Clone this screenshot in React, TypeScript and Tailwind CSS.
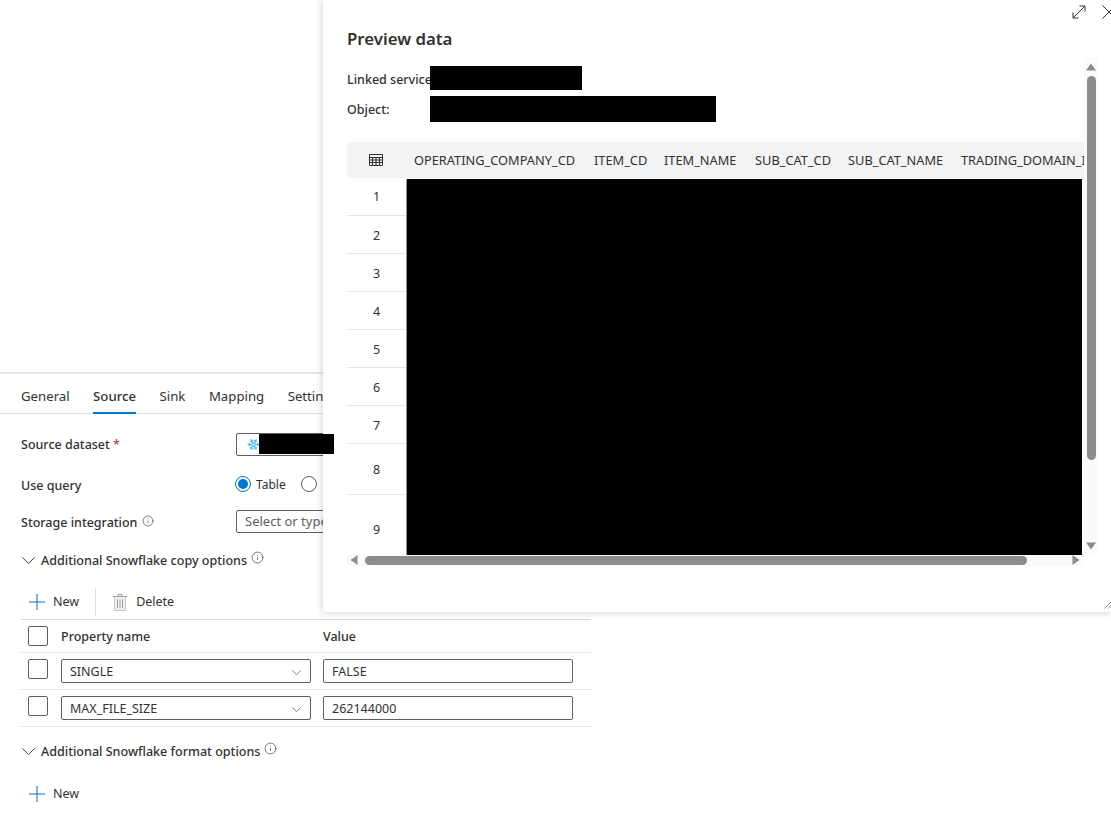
import React from 'react';
import { Snowflake, Info } from 'lucide-react';

const tabs = ['General', 'Source', 'Sink', 'Mapping', 'Settings'];
const rows = [
  { num: 1, h: 'h-[38px] pt-[2px]' },
  { num: 2, h: 'h-[38px] pt-[4px]' },
  { num: 3, h: 'h-[38px] pt-[4px]' },
  { num: 4, h: 'h-[38px] pt-[4px]' },
  { num: 5, h: 'h-[38px] pt-[4px]' },
  { num: 6, h: 'h-[38px] pt-[4px]' },
  { num: 7, h: 'h-[38px] pt-[4px]' },
  { num: 8, h: 'h-[51px] pt-[2px]' },
  { num: 9, h: 'h-[59px] pt-[12px]' },
];
const columns = [
  { name: 'OPERATING_COMPANY_CD', w: 'w-[180px]' },
  { name: 'ITEM_CD', w: 'w-[70px]' },
  { name: 'ITEM_NAME', w: 'w-[91px]' },
  { name: 'SUB_CAT_CD', w: 'w-[93px]' },
  { name: 'SUB_CAT_NAME', w: 'w-[113px]' },
  { name: 'TRADING_DOMAIN_ID', w: 'w-[140px]' },
];
const props = [
  { name: 'SINGLE', value: 'FALSE' },
  { name: 'MAX_FILE_SIZE', value: '262144000' },
];

function Chevron({ w = 13, className = '' }: { w?: number; className?: string }) {
  return (
    <svg width={w} height={w / 2 + 1} viewBox="0 0 14 8" fill="none" stroke="#323130" strokeWidth="1" className={`shrink-0 ${className}`}>
      <path d="M0.5 0.5 7 7 13.5 0.5" />
    </svg>
  );
}

function SectionHeader({ title }: { title: string }) {
  return (
    <div className="flex items-center h-5 pl-[22px] text-[12.55px] font-medium">
      <Chevron className="mr-[6px]" />
      <span>{title}</span>
      <Info size={13} strokeWidth={1.2} className="ml-1 -mt-2" />
    </div>
  );
}

function NewButton() {
  return (
    <div className="flex items-center">
      <svg width="16" height="16" viewBox="0 0 16 16" stroke="#0f6cbd" strokeWidth="1" className="ml-px">
        <path d="M8 0V16M0 8H16" />
      </svg>
      <span className="ml-[8px] pt-px text-[12.5px]">New</span>
    </div>
  );
}

function Arrow({ dir }: { dir: 'up' | 'down' | 'left' | 'right' }) {
  const points = {
    up: '0,8.5 5,1.5 10,8.5',
    down: '0,1.5 5,8.5 10,1.5',
    left: '8.5,0 1.5,5 8.5,10',
    right: '1.5,0 8.5,5 1.5,10',
  }[dir];
  return (
    <svg width="10" height="10" viewBox="0 0 10 10" className="shrink-0">
      <polygon points={points} fill="#8c8c8c" />
    </svg>
  );
}

export default function App() {
  return (
    <div className="relative w-[1111px] h-[824px] overflow-hidden bg-white text-[#323130] font-['Noto_Sans',sans-serif]">
      {/* left panel */}
      <div className="w-[591px] pt-[372px]">
        <div className="border-t-2 border-[#e5e5e5]" />
        <div className="flex gap-[23.5px] h-[40px] pl-[21px] border-b border-[#e1dfdd] text-[13.2px]">
          {tabs.map((t) => (
            <div
              key={t}
              className={`flex items-center pt-[7px] border-b-2 -mb-px ${
                t === 'Source' ? 'border-[#0078d4] font-medium' : 'border-transparent'
              }`}
            >
              {t}
            </div>
          ))}
        </div>

        <div className="relative flex items-center h-[23px] mt-[19px] pl-[21px] text-[12.5px] font-medium">
          <span className="w-[215px] pt-[2px]">
            Source dataset <span className="text-[#c4314b]">*</span>
          </span>
          <div className="flex items-center w-[200px] h-[23px] pl-[10px] border border-[#605e5c] rounded-[2px]">
            <Snowflake size={13} strokeWidth={2} className="text-[#38bdf8]" />
          </div>
          <div className="absolute z-20 left-[259px] top-[1px] w-[75px] h-[20px] bg-black" />
        </div>

        <div className="flex items-center h-[20px] mt-[18px] pl-[21px] text-[12.5px] font-medium">
          <span className="w-[214px] pt-[5px]">Use query</span>
          <span className="flex items-center justify-center w-4 h-4 rounded-full border border-[#0078d4]">
            <span className="w-[10px] h-[10px] rounded-full bg-[#0078d4]" />
          </span>
          <span className="ml-[5px] pt-[2px] font-normal text-[12px]">Table</span>
          <span className="ml-[15px] w-4 h-4 rounded-full border border-[#605e5c]" />
        </div>

        <div className="flex items-center h-[23px] mt-[16px] pl-[21px] text-[12.5px] font-medium">
          <span className="flex items-center w-[215px] pt-[3px]">
            Storage integration
            <Info size={12} strokeWidth={1.2} className="ml-[5px] -mt-1" />
          </span>
          <div className="flex items-center w-[200px] h-[23px] pl-2 border border-[#605e5c] rounded-[2px] font-normal text-[13px] text-[#605e5c] whitespace-nowrap">
            Select or type
          </div>
        </div>

        <div className="mt-[18px]">
          <SectionHeader title="Additional Snowflake copy options" />
        </div>

        <div className="flex items-center h-[28px] mt-[17px] pl-[28px]">
          <NewButton />
          <div className="w-px h-[28px] ml-[16px] bg-[#e1dfdd]" />
          <svg width="14" height="17" viewBox="0 0 14 17" fill="none" className="ml-[17px]">
            <path d="M5 2V0.5H9V2M0 2.5H14" stroke="#a19f9d" />
            <path d="M1.5 3V16.5H12.5V3" fill="#f0efee" stroke="#c8c6c4" />
            <path d="M4.5 5.5V14M7 5.5V14M9.5 5.5V14" stroke="#a19f9d" />
          </svg>
          <span className="ml-[9px] text-[12.5px]">Delete</span>
        </div>

        {/* property table */}
        <div className="ml-[21px] mt-[3px] border-t border-[#d9d9d9] text-[12.5px]">
          <div className="flex items-center h-[33px] border-b border-[#e5e5e5] font-medium">
            <span className="w-5 h-5 ml-[7px] border border-[#605e5c] rounded-[2px]" />
            <span className="w-[262px] ml-[13px] pt-[2px]">Property name</span>
            <span className="pt-[2px]">Value</span>
          </div>
          {props.map((p) => (
            <div key={p.name} className="flex items-center h-[37px] border-b border-[#e5e5e5]">
              <span className="w-5 h-5 ml-[7px] -mt-1 border border-[#605e5c] rounded-[2px]" />
              <div className="flex items-center justify-between w-[250px] h-[24px] ml-[13px] pl-[8px] pr-[9px] pt-[2px] border border-[#605e5c] rounded-[2px]">
                {p.name}
                <Chevron w={9} className="mt-[2px]" />
              </div>
              <div className="flex items-center w-[250px] h-[24px] ml-[12px] px-[8px] pt-[2px] border border-[#605e5c] rounded-[2px]">
                {p.value}
              </div>
            </div>
          ))}
        </div>

        <div className="mt-[15px]">
          <SectionHeader title="Additional Snowflake format options" />
        </div>
        <div className="mt-[22px] pl-[28px]">
          <NewButton />
        </div>
      </div>

      {/* preview dialog */}
      <div className="absolute z-10 right-0 top-0 w-[788px] h-[612px] bg-white shadow-[0_0_8px_rgba(0,0,0,0.22)]">
        <svg width="14" height="14" viewBox="0 0 14 14" fill="none" stroke="#323130" className="absolute left-[749px] top-[5px]">
          <path d="M1 13 13 1M7.5 1H13V6.5M1 7.5V13H6.5" />
        </svg>
        <svg width="14" height="14" viewBox="0 0 14 14" fill="none" stroke="#323130" className="absolute left-[779px] top-[5px]">
          <path d="M0.5 0.5 13.5 13.5M0.5 13.5 13.5 0.5" />
        </svg>
        <svg width="8" height="8" viewBox="0 0 8 8" fill="none" stroke="#8c8c8c" className="absolute left-[781px] top-[601px]">
          <path d="M0.5 7.5 7.5 0.5M4 7.5 7.5 4" />
        </svg>

        <h2 className="pl-6 pt-[27px] h-[58px] text-[16.8px] leading-6 font-semibold">Preview data</h2>

        <div className="flex h-[510px] pl-6">
          <div className="w-[737px]">
            <div className="flex items-center h-[24px] mt-[8px] text-[12.5px] font-medium">
              <span className="w-[83px] whitespace-nowrap pt-[5px]">Linked service</span>
              <div className="w-[152px] h-[24px] bg-black" />
            </div>
            <div className="flex items-center h-[26px] mt-[6px] text-[12.5px] font-medium">
              <span className="w-[83px] pt-[3px]">Object:</span>
              <div className="w-[286px] h-[26px] bg-black" />
            </div>

            {/* grid */}
            <div className="flex h-[36px] mt-[20px] bg-[#f3f3f3] overflow-hidden text-[12.8px] whitespace-nowrap">
              <div className="flex items-center justify-center w-[58px] shrink-0">
                <svg width="14" height="12" viewBox="0 0 14 12" fill="none" stroke="#323130" strokeWidth="1">
                  <path d="M0.5 0.5H13.5V11.5H0.5ZM0.5 3.5H13.5M0.5 6H13.5M0.5 8.5H13.5M3.5 3.5V11.5M7 3.5V11.5M10.5 3.5V11.5" />
                </svg>
              </div>
              <div className="flex items-center pl-[9px] pt-px">
                {columns.map((c) => (
                  <span key={c.name} className={`${c.w} shrink-0`}>
                    {c.name}
                  </span>
                ))}
              </div>
            </div>
            <div className="flex h-[377px]">
              <div className="w-[59px] shrink-0 text-[12.5px]">
                {rows.map((r) => (
                  <div key={r.num} className={`flex items-center justify-center border-b last:border-b-0 border-[#e5e5e5] ${r.h}`}>
                    {r.num}
                  </div>
                ))}
              </div>
              <div className="w-[676px] h-[376px] mt-px bg-black border-l border-[#8c8c8c]" />
            </div>

            {/* horizontal scrollbar */}
            <div className="flex items-center h-[12px] bg-[#fafafa] pl-[2px] -mt-px">
              <Arrow dir="left" />
              <div className="w-[662px] h-[9px] ml-[6px] rounded-full bg-[#8c8c8c]" />
              <div className="ml-[44px]">
                <Arrow dir="right" />
              </div>
            </div>
          </div>

          {/* vertical scrollbar */}
          <div className="flex flex-col items-center w-[14px] h-[497px] bg-[#fafafa]">
            <div className="mt-[4px]">
              <Arrow dir="up" />
            </div>
            <div className="w-[9px] h-[384px] mt-[4px] rounded-full bg-[#8c8c8c]" />
            <div className="mt-[81px]">
              <Arrow dir="down" />
            </div>
          </div>
        </div>
      </div>
    </div>
  );
}
